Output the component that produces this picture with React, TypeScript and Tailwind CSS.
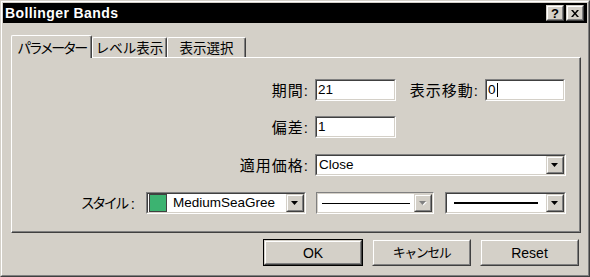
import React from "react";

const FONT = "font-['Liberation_Sans','Noto_Sans_CJK_JP',sans-serif]";

function Sunken({
  className = "",
  light = false,
  children,
}: {
  className?: string;
  light?: boolean;
  children?: React.ReactNode;
}) {
  return (
    <div
      className={`border border-t-[#808080] border-l-[#808080] border-r-white border-b-white ${className}`}
    >
      <div
        className={`h-full border ${
          light
            ? "border-[#D4D0C8]"
            : "border-t-[#404040] border-l-[#404040] border-r-[#D4D0C8] border-b-[#D4D0C8]"
        } bg-white flex items-center`}
      >
        {children}
      </div>
    </div>
  );
}

function Raised({
  className = "",
  children,
}: {
  className?: string;
  children?: React.ReactNode;
}) {
  return (
    <div
      className={`border border-t-[#D4D0C8] border-l-[#D4D0C8] border-r-[#404040] border-b-[#404040] ${className}`}
    >
      <div className="h-full border border-t-white border-l-white border-r-[#808080] border-b-[#808080] bg-[#D4D0C8] flex items-center justify-center">
        {children}
      </div>
    </div>
  );
}

function Arrow({ disabled = false }: { disabled?: boolean }) {
  return (
    <svg width="8" height="5" viewBox="0 0 8 5">
      {disabled && <path d="M1 1h7L4.5 4.5z" fill="#ffffff" />}
      <path d="M0 0h7L3.5 4z" fill={disabled ? "#808080" : "#000000"} />
    </svg>
  );
}

function DropButton({ disabled = false }: { disabled?: boolean }) {
  return (
    <Raised className="w-[18px] h-full shrink-0">
      <Arrow disabled={disabled} />
    </Raised>
  );
}

function Label({ w, children }: { w: string; children: React.ReactNode }) {
  return (
    <div className={`${w} shrink-0 text-right text-[15px] tracking-[1px] text-black leading-none`}>
      {children}
    </div>
  );
}

function Tab({
  active = false,
  w,
  children,
}: {
  active?: boolean;
  w: string;
  children: React.ReactNode;
}) {
  return (
    <div
      className={`${w} ${
        active ? "h-[23px] -mb-px z-10 pt-[4px]" : "h-[20px] pt-[2px]"
      } relative bg-[#D4D0C8] border-t border-l border-white border-r border-r-[#404040] rounded-t-[2px] shadow-[inset_-1px_0_0_#808080] text-center text-[13.5px] text-black leading-[17px] whitespace-nowrap`}
    >
      {children}
    </div>
  );
}

function PushButton({
  label,
  primary = false,
  cjk = false,
}: {
  label: string;
  primary?: boolean;
  cjk?: boolean;
}) {
  const inner = (
    <Raised className="w-full h-full">
      <span
        className={`${cjk ? "text-[13px] tracking-[-1.5px]" : "text-[14px]"} text-black leading-none`}
      >
        {label}
      </span>
    </Raised>
  );
  return primary ? (
    <div className="w-[100px] h-[27px] border border-black">{inner}</div>
  ) : (
    <div className="w-[99px] h-[27px]">{inner}</div>
  );
}

export default function App() {
  return (
    <div
      className={`w-[590px] h-[277px] bg-[#D4D0C8] border border-t-[#D4D0C8] border-l-[#D4D0C8] border-r-[#404040] border-b-[#404040] ${FONT}`}
    >
      <div className="h-full border border-t-white border-l-white border-r-[#808080] border-b-[#808080] p-px flex flex-col">
        {/* title bar */}
        <div className="h-[20px] bg-black flex items-center pl-[2px] pr-[3px] shrink-0">
          <span className="text-white font-bold text-[14px] tracking-[0.4px] leading-none">
            Bollinger Bands
          </span>
          <div className="ml-auto flex gap-[2px]">
            <Raised className="w-[18px] h-[16px]">
              <span className="text-[13px] font-bold leading-none text-black">?</span>
            </Raised>
            <Raised className="w-[18px] h-[16px]">
              <svg width="8" height="7" viewBox="0 0 8 7">
                <path d="M0 0h2l2 2.5L6 0h2L5 3.5 8 7H6L4 4.5 2 7H0l3-3.5z" fill="#000" />
              </svg>
            </Raised>
          </div>
        </div>

        {/* tabs */}
        <div className="mt-[12px] ml-[8px] flex items-end h-[22px] relative z-10">
          <Tab active w="w-[81px]">
            <span className="text-[14px] tracking-[-2.5px]">パラメーター</span>
          </Tab>
          <Tab w="w-[75px]">レベル表示</Tab>
          <Tab w="w-[79px]">表示選択</Tab>
        </div>

        {/* panel */}
        <div className="ml-[8px] w-[570px] h-[176px] border border-t-white border-l-white border-r-[#404040] border-b-[#404040] shadow-[inset_-1px_-1px_0_#808080] pt-[21px] flex flex-col gap-[15px]">
          <div className="flex items-center h-[22px]">
            <Label w="w-[297px]">期間:</Label>
            <Sunken className="ml-[6px] w-[81px] h-[22px]">
              <span className="pl-[1px] text-[13.5px] leading-none">21</span>
            </Sunken>
            <Label w="w-[83px]">表示移動:</Label>
            <Sunken className="ml-[6px] w-[80px] h-[22px]">
              <span className="pl-[1px] text-[13.5px] leading-none">0</span>
              <span className="ml-px w-px h-[14px] bg-black" />
            </Sunken>
          </div>
          <div className="flex items-center h-[22px]">
            <Label w="w-[297px]">偏差:</Label>
            <Sunken className="ml-[6px] w-[81px] h-[22px]">
              <span className="pl-[1px] text-[13.5px] leading-none">1</span>
            </Sunken>
          </div>
          <div className="flex items-center h-[22px] mt-px">
            <Label w="w-[297px]">適用価格:</Label>
            <Sunken className="ml-[6px] w-[251px] h-[22px]">
              <span className="pl-[2px] text-[13.5px] leading-none flex-1">Close</span>
              <DropButton />
            </Sunken>
          </div>
          <div className="flex items-center h-[22px] mt-px">
            <div className="w-[123px] shrink-0 flex justify-end items-center text-black leading-none">
              <span className="text-[14px] tracking-[-2.5px]">スタイル</span>
              <span className="ml-[4px] text-[15px]">:</span>
            </div>
            <Sunken className="ml-[11px] w-[160px] h-[22px]">
              <div className="ml-[1px] w-[18px] h-[18px] border border-[#404040] bg-[#3CB371] shrink-0" />
              <span className="ml-[6px] text-[13.5px] leading-none flex-1 whitespace-nowrap overflow-hidden">
                MediumSeaGree
              </span>
              <DropButton />
            </Sunken>
            <Sunken light className="ml-[10px] w-[118px] h-[22px]">
              <div className="flex-1 px-[4px]">
                <div className="h-px bg-black" />
              </div>
              <DropButton disabled />
            </Sunken>
            <Sunken className="ml-[11px] w-[121px] h-[22px]">
              <div className="flex-1 pl-[7px] pr-[8px]">
                <div className="h-[2px] bg-black" />
              </div>
              <DropButton />
            </Sunken>
          </div>
        </div>

        {/* buttons */}
        <div className="mt-[6px] pr-[8px] flex justify-end gap-[9px]">
          <PushButton label="OK" primary />
          <PushButton label="キャンセル" cjk />
          <PushButton label="Reset" />
        </div>
      </div>
    </div>
  );
}
